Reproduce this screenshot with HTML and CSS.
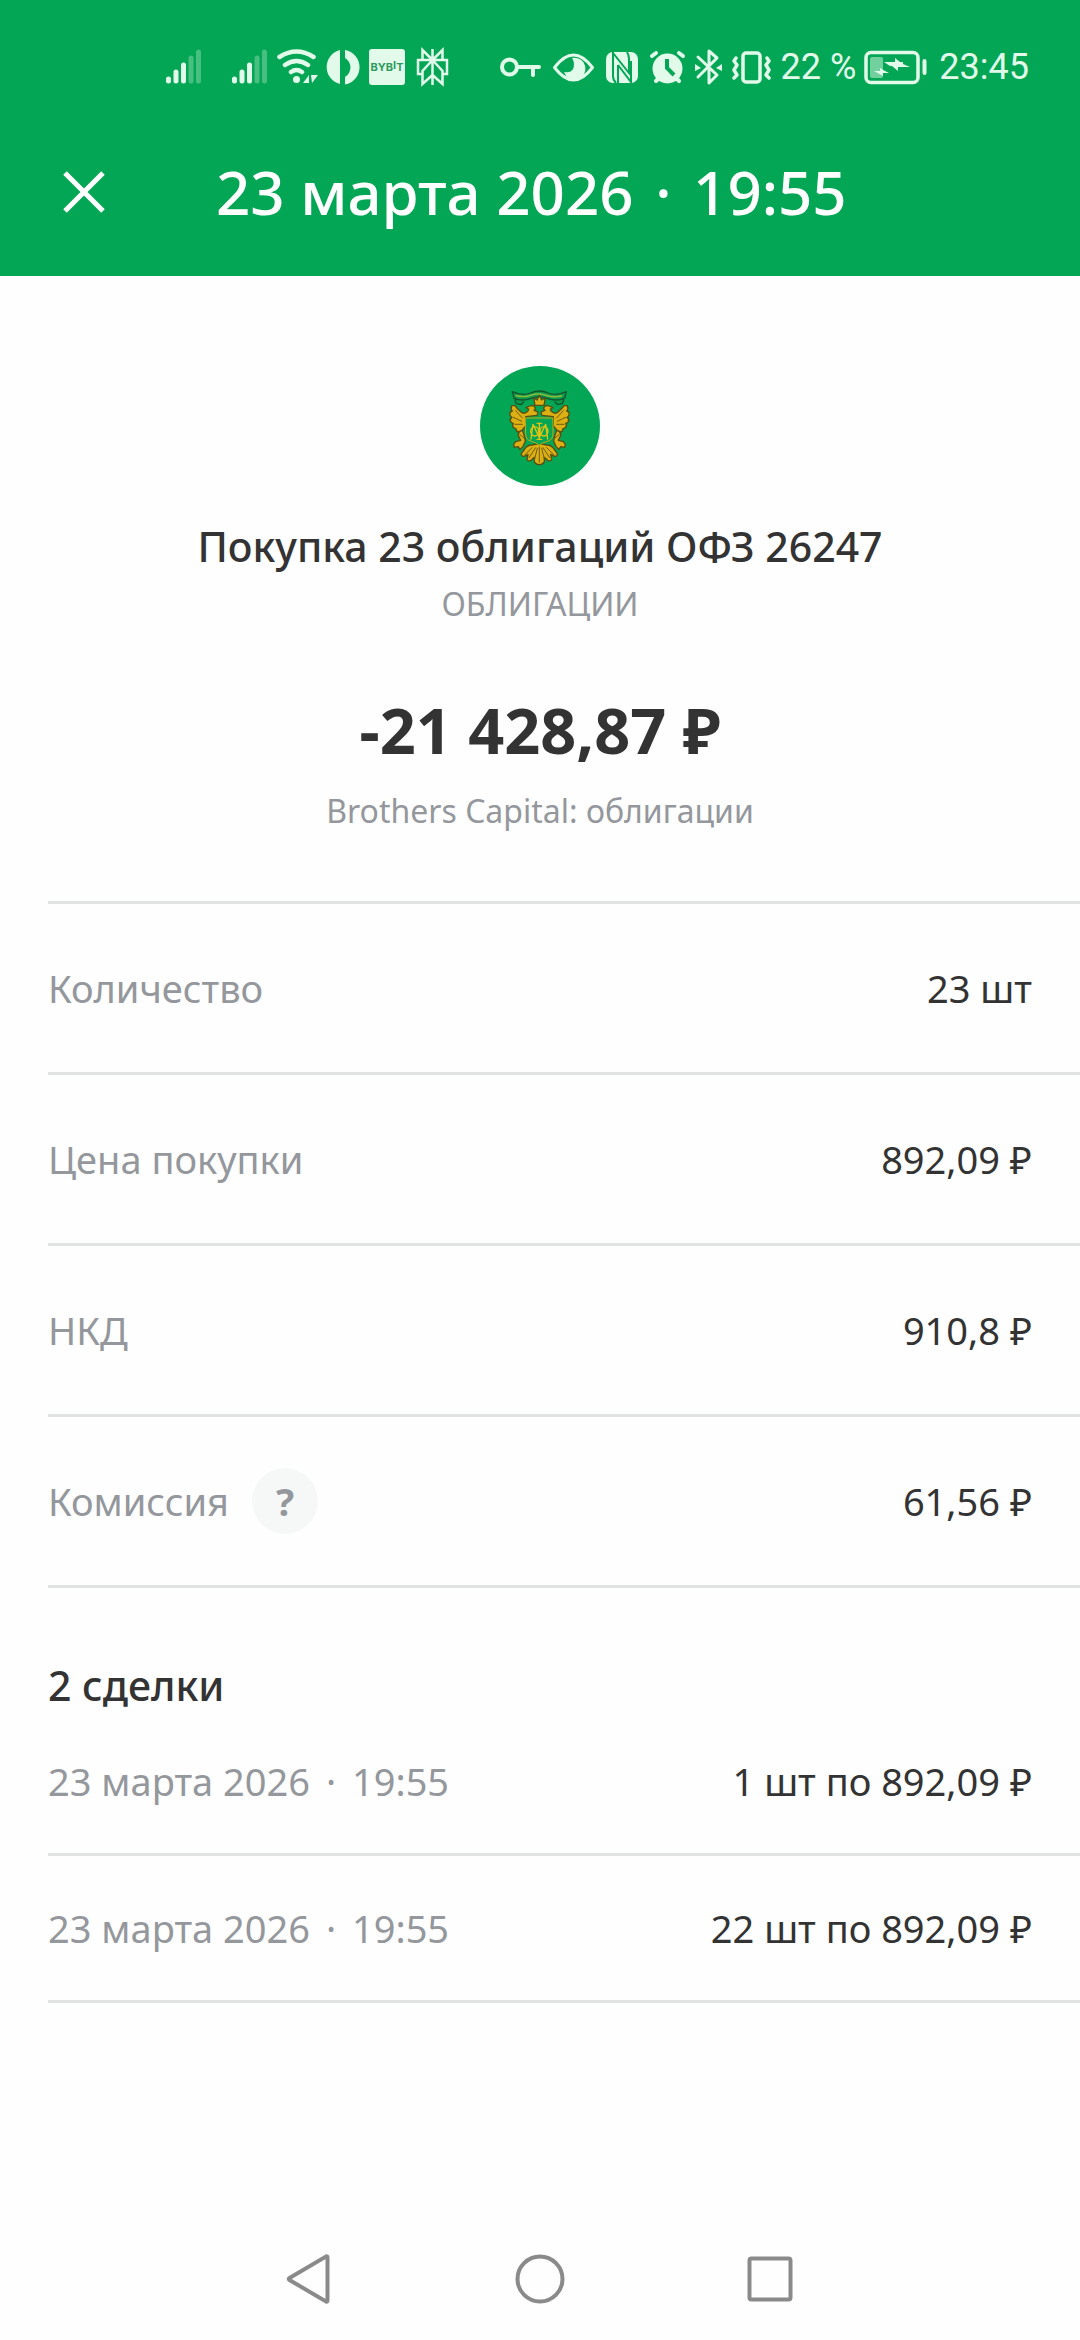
FILE: index.html
```html
<!DOCTYPE html>
<html lang="ru">
<head>
<meta charset="utf-8">
<meta name="viewport" content="width=device-width, initial-scale=1">
<title>Покупка облигаций</title>
<link rel="stylesheet" href="styles.css">
</head>
<body>
<div class="screen">
  <header class="top">
    <div class="status">
      <div class="status-group">
        <svg class="status-icon" width="66" height="40" viewBox="160 46 66 40" fill="none" stroke="currentColor" stroke-width="5" stroke-linecap="round" aria-hidden="true"><path d="M168.500 78v2M176 71v9M183.500 64v16"/><path opacity=".3" d="M191 57v23M198.500 51v29"/></svg>
        <svg class="status-icon" width="47" height="40" viewBox="225 46 47 40" fill="none" stroke="currentColor" stroke-width="5" stroke-linecap="round" aria-hidden="true"><path d="M233.500 78v2M241 71v9M248.500 64v16"/><path opacity=".3" d="M256 57v23M263.500 51v29"/></svg>
        <svg class="status-icon" width="48" height="40" viewBox="272 46 48 40" fill="none" stroke="currentColor" stroke-width="4.500" stroke-linecap="round" aria-hidden="true"><path d="M278.500 56q17-11 34 0M284 64q11.500-8 23 0M290 71q5.500-4 11 0"/><circle cx="295.500" cy="78.500" r="3.500" fill="currentColor" stroke="none"/><path d="M308 74v8h-6zM310 74h7l-6 8z" fill="currentColor" stroke="none"/></svg>
        <svg class="status-icon" width="43" height="40" viewBox="320 46 43 40" aria-hidden="true"><path fill="currentColor" d="M339 49v34a17.500 17.500 0 0 1 0-34zM344 49a17.500 17.500 0 0 1 0 34.500v-7.500a11 11 0 0 0 0-19z"/></svg>
        <svg class="status-icon" width="47" height="40" viewBox="363 46 47 40" role="img" aria-label="Bybit"><rect x="368" y="48" width="36" height="36" rx="3" fill="currentColor"/><text class="bybit" x="386" y="70" text-anchor="middle">BYB<tspan dy="-2">I</tspan><tspan dy="2">T</tspan></text></svg>
        <svg class="status-icon" width="42" height="40" viewBox="410 46 42 40" fill="none" stroke="currentColor" stroke-width="2.500" aria-hidden="true"><path d="M431.500 48v36M431.500 59l-10-10v10M431.500 59l10-10v10M422 73h-5V59h29v14h-5M431.500 59l-10 11v13l10-9M431.500 59l10 11v13l-10-9"/></svg>
      </div>
      <div class="status-group">
        <svg class="status-icon" width="51" height="40" viewBox="494 46 51 40" fill="none" stroke="currentColor" stroke-width="4" stroke-linecap="round" aria-hidden="true"><circle cx="507.500" cy="66" r="7.500"/><path d="M516 66h21M531 66v8"/></svg>
        <svg class="status-icon" width="53" height="40" viewBox="545 46 53 40" aria-hidden="true"><path fill="none" stroke="currentColor" stroke-width="3" stroke-linejoin="round" d="M552.500 66.500q19-25 38 0q-19 25-38 0z"/><path fill="currentColor" d="M570 57a11 11 0 1 1-8 14q10 2 10-8q0-3-2-6z"/></svg>
        <svg class="status-icon" width="43" height="40" viewBox="598 46 43 40" aria-hidden="true"><rect x="604" y="51" width="32" height="31" rx="7" fill="currentColor"/><path class="cut" d="M611 51v24q0 4 3 7M611 52l16 20V58q0-4-2-7M616 64l13 17V60M616 64v18"/></svg>
        <svg class="status-icon" width="47" height="40" viewBox="641 46 47 40" aria-hidden="true"><g stroke="currentColor" stroke-width="4" stroke-linecap="round"><path d="M650 55l4-3M681 55l-4-3M654 80l4-4M677 80l-4-4"/></g><circle cx="665.500" cy="67.500" r="15" fill="currentColor"/><path class="cut wide" d="M665 58v9l7 7"/></svg>
        <svg class="status-icon" width="37" height="40" viewBox="688 46 37 40" fill="none" stroke="currentColor" stroke-width="3" stroke-linecap="round" stroke-linejoin="round" aria-hidden="true"><path d="M696 56l19 18-8 8V50l8 7-19 19"/><path fill="currentColor" stroke="none" d="M693 63l6 4-6 3zM720 63l-6 4 6 3z"/></svg>
        <svg class="status-icon" width="54" height="40" viewBox="725 46 54 40" fill="none" stroke="currentColor" stroke-width="3.500" stroke-linejoin="round" stroke-linecap="round" aria-hidden="true"><rect x="741" y="52" width="17" height="29" rx="3"/><path d="M734 57l-2 3 3 4-3 5 3 5-3 3M765 57l2 3-3 4 3 5-3 5 3 3"/></svg>
        <span class="status-text">22 %</span>
        <svg class="status-icon" width="83" height="40" viewBox="855 46 83 40" aria-hidden="true"><rect x="865" y="51.500" width="52" height="30" rx="5" fill="none" stroke="currentColor" stroke-width="3.500"/><rect x="869" y="56" width="13" height="21" rx="2" fill="currentColor" opacity=".5"/><path d="M923.500 60v12" stroke="currentColor" stroke-width="4" stroke-linecap="round"/><path fill="currentColor" d="M883 61h11l0-4 5 4h3v2l7 3h-12l0 4-6-5h-2zM873 70h6l0-3 5 3 4 2h-6l0 3z"/></svg>
        <time class="status-text">23:45</time>
      </div>
    </div>
    <div class="titlebar">
      <button class="close" type="button" aria-label="Закрыть"><svg width="42" height="42" viewBox="0 0 42 42" fill="none" stroke="currentColor" stroke-width="5" aria-hidden="true"><path d="M2 2l38 38M40 2l-38 38"/></svg></button>
      <h1 class="title">23 марта 2026 <span class="dot">·</span> 19:55</h1>
    </div>
  </header>

  <main class="content">
    <section class="summary">
      <svg class="avatar" width="120" height="120" viewBox="0 0 120 120" role="img" aria-label="Герб">
        <circle cx="60" cy="60" r="60" fill="#03a654"/>
        <g transform="translate(5 5) scale(.3333)" stroke-linejoin="round" stroke-linecap="round">
          <g fill="#0b9a4b" stroke="#14532c" stroke-width="4">
            <path d="M98 78l-8 10 4 10 14 3 8-8M228 78l8 10-4 10-14 3-8-8"/>
            <path d="M82 62q30 14 54 4 27-12 54 0 24 10 54-4l-5 20q-26 10-54 0-24-9-46 0-28 10-52 0z"/>
          </g>
          <path d="M94 74q24 6 46-2 23-7 46 2 22 6 46 0" fill="none" stroke="#8bbb3d" stroke-width="5" stroke-dasharray="4 3"/>
          <g fill="#dcb012" stroke="#5b4d12" stroke-width="4">
            <path d="M146 80l10 7 7-14 7 14 11-7-4 23h-27z"/>
            <path id="wing" d="M80 104q-4 10 2 16-9 2-7 12 2 6 6 7-8 5-4 13 3 5 8 5-5 8 1 13l8 4q-1 8 6 9l10-4 12-14 0-28 34-4 3-10-12-5q6-4 3-9-6-8-15-4l-12 5 8 4-2 6q-12 12-22 2-10-7-17-18z"/>
            <use href="#wing" transform="matrix(-1 0 0 1 327 0)"/>
            <path id="claw" d="M112 178q-14 4-12 16l7 14-15 4 -6 8 2 9 12-2 5 9 9-10 7-15-3-16z"/>
            <use href="#claw" transform="matrix(-1 0 0 1 327 0)"/>
            <path d="M163 218l-22 4q-14 0-22 12l-10 14q-1 9 9 8l11-6-3 14q2 9 12 4l10-9 0 14q7 9 15 8 8 1 15-8l0-14 10 9q10 5 12-4l-3-14 11 6q10 1 9-8l-10-14q-8-12-22-12z"/>
          </g>
          <g fill="none" stroke="#6f5b10" stroke-width="3">
            <path d="M92 119l20 22M85 139l25 12M90 160l22 0M235 119l-20 22M242 139l-25 12M237 160l-22 0"/>
            <path d="M163 228v46M152 230l-20 30M174 230l20 30M141 230l-22 22M185 230l22 22M157 232l-8 32M170 232l8 32"/>
            <path d="M104 190l12 10M223 190l-12 10"/>
          </g>
          <path d="M122 141h82v48q0 17-17 22-14 3-24 12-10-9-24-12-17-5-17-22z" fill="#03a654" stroke="#c9a90f" stroke-width="3"/>
          <g fill="none" stroke="#e4c412" stroke-width="4">
            <path d="M163 157v48M156 157h14M156 205h14M138 204l6-44 19 40 19-40 6 44"/>
            <ellipse cx="149" cy="181" rx="12" ry="14"/><ellipse cx="177" cy="181" rx="12" ry="14"/>
          </g>
        </g>
      </svg>
      <h2 class="name">Покупка 23 облигаций ОФЗ 26247</h2>
      <p class="kind">ОБЛИГАЦИИ</p>
      <p class="amount">-21 428,87 ₽</p>
      <p class="account">Brothers Capital: облигации</p>
    </section>

    <dl class="details">
      <div class="row"><dt>Количество</dt><dd>23 шт</dd></div>
      <div class="row"><dt>Цена покупки</dt><dd>892,09 ₽</dd></div>
      <div class="row"><dt>НКД</dt><dd>910,8 ₽</dd></div>
      <div class="row"><dt class="with-help">Комиссия <button class="help" type="button" aria-label="О комиссии">?</button></dt><dd>61,56 ₽</dd></div>
    </dl>

    <section class="deals">
      <h2 class="deals-title">2 сделки</h2>
      <dl class="deals-list">
        <div class="row"><dt>23 марта 2026 <span class="dot">·</span> 19:55</dt><dd>1 шт по 892,09 ₽</dd></div>
        <div class="row"><dt>23 марта 2026 <span class="dot">·</span> 19:55</dt><dd>22 шт по 892,09 ₽</dd></div>
      </dl>
    </section>
  </main>

  <nav class="navbar" aria-label="Системная навигация">
    <button class="nav-button" type="button" aria-label="Назад"><svg width="50" height="50" viewBox="0 0 50 50"><path d="M42.500 3.500v43q0 1.500-1.500 1L4.500 26q-1.500-1 0-2L41 2.500q1.500-.5 1.500 1z"/></svg></button>
    <button class="nav-button" type="button" aria-label="Домой"><svg width="50" height="50" viewBox="0 0 50 50"><circle cx="25" cy="25" r="22.500"/></svg></button>
    <button class="nav-button" type="button" aria-label="Недавние"><svg width="50" height="50" viewBox="0 0 50 50"><rect x="4.500" y="4.500" width="41" height="41" rx="2"/></svg></button>
  </nav>
</div>
</body>
</html>
```
FILE: styles.css
```css
:root {
  --green: #03a654;
  --ink: #333333;
  --muted: #94979c;
  --line: #e1e2e2;
}

* {
  box-sizing: border-box;
}

body,
h1,
h2,
p,
dl,
dd {
  margin: 0;
}

body {
  background: #fefefe;
  color: var(--ink);
  font-family: "Noto Sans", sans-serif;
}

button {
  padding: 0;
  border: 0;
  background: none;
  color: inherit;
  font: inherit;
}

svg {
  display: block;
}

.screen {
  display: flex;
  flex-direction: column;
  min-height: 100vh;
}

.dot {
  margin: 0 6px;
}

/* Header */

.top {
  background: var(--green);
  color: #ffffff;
}

.status {
  display: flex;
  justify-content: space-between;
  padding: 47px 51px 0 160px;
  color: #e2faea;
}

.status-group {
  display: flex;
  align-items: center;
}

.status-icon {
  flex: none;
}

.status-text {
  font: 400 36px/40px Roboto, sans-serif;
  white-space: nowrap;
}

.bybit {
  fill: #2c9a5c;
  font: 700 11px Inter, sans-serif;
}

.cut {
  fill: none;
  stroke: var(--green);
  stroke-width: 2;
}

.cut.wide {
  stroke-width: 4;
}

.titlebar {
  display: flex;
  align-items: center;
  height: 189px;
  padding: 20px 48px 0;
}

.close {
  display: grid;
  place-items: center;
  width: 72px;
  height: 72px;
  margin-right: 96px;
}

.title {
  font-size: 60px;
  font-weight: 500;
  line-height: 80px;
}

/* Summary */

.content {
  flex: 1;
}

.summary {
  display: flex;
  flex-direction: column;
  align-items: center;
  padding: 90px 48px 68px;
  text-align: center;
}

.name {
  margin-top: 32px;
  font-size: 41px;
  font-weight: 500;
  line-height: 56px;
}

.kind,
.account {
  color: var(--muted);
  font-size: 32px;
  line-height: 44px;
}

.kind {
  margin-top: 8px;
}

.amount {
  margin-top: 64px;
  font-size: 63px;
  font-weight: 700;
  line-height: 80px;
}

.account {
  margin-top: 19px;
}

/* Rows */

.details,
.deals-list {
  margin-left: 48px;
}

.details {
  border-top: 3px solid var(--line);
}

.row {
  display: flex;
  align-items: center;
  justify-content: space-between;
  height: 147px;
  padding-right: 48px;
  border-bottom: 3px solid var(--line);
  font-size: 38px;
  line-height: 52px;
}

.details .row {
  height: 171px;
}

.row dt {
  color: var(--muted);
}

.with-help {
  display: flex;
  align-items: center;
  gap: 23px;
}

.help {
  width: 66px;
  height: 66px;
  border-radius: 50%;
  background: #f6f8f8;
  font-weight: 700;
}

.deals {
  padding-top: 73px;
}

.deals-title {
  padding-left: 48px;
  font-size: 41px;
  font-weight: 500;
  line-height: 48px;
}

/* Navigation bar */

.navbar {
  display: flex;
  justify-content: center;
  gap: 180px;
  padding: 36px 0;
}

.nav-button svg {
  fill: none;
  stroke: #8a8a8a;
  stroke-width: 4;
}
```
